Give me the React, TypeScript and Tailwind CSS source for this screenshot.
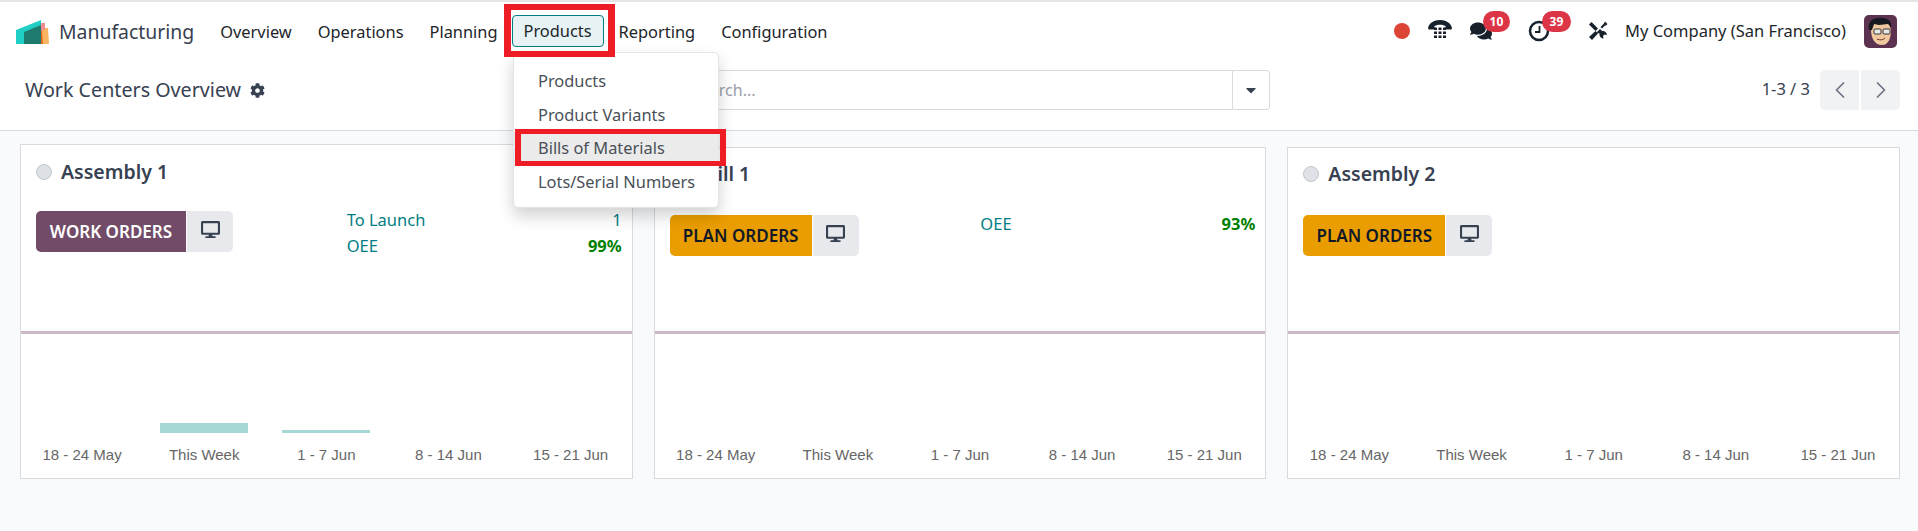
import { FaCog, FaDesktop, FaComments, FaCaretDown } from "react-icons/fa";
import { ChevronLeft, ChevronRight } from "lucide-react";

const NAV = [
  { label: "Overview", cls: "ml-[26px]" },
  { label: "Operations", cls: "ml-[26px]" },
  { label: "Planning", cls: "ml-[26px]" },
];

const WEEKS = ["18 - 24 May", "This Week", "1 - 7 Jun", "8 - 14 Jun", "15 - 21 Jun"];

const MENU = ["Products", "Product Variants", "Bills of Materials", "Lots/Serial Numbers"];

function Logo() {
  return (
    <svg width="34" height="24" viewBox="0 0 34 24">
      <polygon points="22,4 27,3 27,8 32,8 33,24 22,24" fill="#fbb461" />
      <polygon points="25,3 29,3 29,9 25,12" fill="#f28b8f" />
      <polygon points="26,11 27,24 22,24 22,12" fill="#e8691f" />
      <polygon points="0,10 25,0 25,24 0,24" fill="#1fcfc6" />
      <polygon points="8,12 25,5 25,24 8,24" fill="#1f7a6e" />
    </svg>
  );
}

function PhoneIcon() {
  return (
    <svg width="24" height="22" viewBox="0 0 24 22" fill="#16212c">
      <path d="M0 8C1 3 6 0 12 0s11 3 12 8c0 1-1 1.500-2 1.500h-3c-1 0-1.500-.5-1.500-1.500V6C15.500 5 14 4.700 12 4.700S8.500 5 6.500 6v2C6.500 9 6 9.500 5 9.500H2C1 9.500 0 9 0 8z" />
      {[7, 11, 15].map((y) =>
        [6, 10.500, 15].map((x) => <rect key={`${x}-${y}`} x={x} y={y + 0.5} width="3" height="2.500" />),
      )}
    </svg>
  );
}

function ClockIcon() {
  return (
    <svg width="22" height="22" viewBox="0 0 22 22" fill="none" stroke="#16212c" strokeWidth="2.500">
      <circle cx="11" cy="11" r="9" />
      <path d="M11.500 6v6H7" strokeWidth="1.800" />
    </svg>
  );
}

function ToolsIcon() {
  return (
    <svg width="20" height="20" viewBox="0 0 20 20" fill="#16212c">
      <path d="M1 3.500 3.500 1l6.500 6.500-2.500 2.500z" />
      <path d="M17 .5 19.500 3l-1.500 1.500-1 0-3 3-1.500-1.500 3-3z" />
      <path d="M8.500 11.500 12 8l2 2c2.500-.5 5 1.500 5 4l-2.500-.5-1.500 1.500.5 2.500c-2.500 0-4.500-2.500-4-5z" />
      <path d="M7.500 10 10 12.500 4 19 1 16z" />
    </svg>
  );
}

function Avatar() {
  return (
    <svg width="33" height="33" viewBox="0 0 33 33" className="rounded-[5px]">
      <rect width="33" height="33" fill="#5b3350" />
      <path d="M7 14c0 10 4 16 11 16s9-8 9-15l-2-6H10z" fill="#f0c8a0" />
      <path d="M5 15C3 6 10 2 18 3c7 .5 10 4 9 9l-3-3-9 1-5-1-2 6z" fill="#16191f" />
      <rect x="10" y="14" width="7" height="5" rx="1" fill="#e8e8e8" stroke="#333" />
      <rect x="19" y="14" width="7" height="5" rx="1" fill="#e8e8e8" stroke="#333" />
      <path d="M13 24c3 1.500 6 1 8-1" stroke="#7a3a2a" fill="none" />
    </svg>
  );
}

interface CardProps {
  name: string;
  action: string;
  actionClass: string;
  stats: { label: string; value: string; strong?: boolean }[];
  bars: number[];
  cardClass: string;
  titleClass: string;
  actionRowClass: string;
}

function WorkCenterCard({ name, action, actionClass, stats, bars, cardClass, titleClass, actionRowClass }: CardProps) {
  return (
    <div className={`flex flex-col border border-[#d8dadd] bg-white ${cardClass}`}>
      <div className={`flex h-[26px] items-center pl-[15px] ${titleClass}`}>
        <span className="h-[16px] w-[16px] rounded-full border border-[#c3c7cc] bg-[#dee2e6]" />
        <span className="ml-[9px] text-[19.500px] leading-[26px] font-semibold text-[#374151]">{name}</span>
      </div>
      <div className={`flex items-start pl-[15px] pr-[10px] ${actionRowClass}`}>
        <div className="flex h-[41px] overflow-hidden rounded-[5px]">
          <div className={`flex items-center justify-center text-[17px] font-semibold ${actionClass}`}>{action}</div>
          <div className="ml-px flex w-[46px] items-center justify-center bg-[#e7e9ed] text-[#374151]">
            <FaDesktop size={19} className="-mt-1" />
          </div>
        </div>
        <div className="-mt-[4px] ml-auto w-[275px] text-[16.500px]">
          {stats.map((s) => (
            <div key={s.label} className="flex h-[26px] items-center justify-between">
              <span className="text-[#017e84]">{s.label}</span>
              <span className={s.strong ? "font-bold text-[#008000]" : "text-[#017e84]"}>{s.value}</span>
            </div>
          ))}
        </div>
      </div>
      <div className="flex-1" />
      <div className="h-[3px] bg-[#cdb8ca]" />
      <div className="grid h-[99px] grid-cols-5 items-end">
        {bars.map((h, i) => (
          <div key={WEEKS[i]} className="mx-auto w-[88px] bg-[#a6d8d6]" style={{ height: h }} />
        ))}
      </div>
      <div className="grid h-[45px] grid-cols-5 pt-[11px] font-['Liberation_Sans',sans-serif] text-[15px] leading-[22px] text-[#666666]">
        {WEEKS.map((w) => (
          <div key={w} className="text-center">{w}</div>
        ))}
      </div>
    </div>
  );
}

export default function App() {
  return (
    <div className="relative h-[531px] w-[1918px] overflow-hidden bg-[#f9fafb] font-['Noto_Sans',sans-serif] text-[#374151]">
      <div className="h-[2px] bg-[#e5e5e5]" />
      <div className="bg-white">
        {/* Navbar */}
        <div className="flex h-[56px] items-start">
          <div className="mt-[18px] ml-[16px]">
            <Logo />
          </div>
          <span className="mt-[15px] ml-[9px] text-[19.400px] leading-[30px]">Manufacturing</span>
          {NAV.map((n) => (
            <span key={n.label} className={`mt-[15px] text-[16.400px] leading-[30px] text-[#212529] ${n.cls}`}>{n.label}</span>
          ))}
          <span className="mt-[13px] ml-[14px] flex h-[32px] w-[92px] items-center justify-center rounded-[4px] border border-[#017e84] bg-[#e6f2f3] text-[16.400px] text-[#212529]">Products</span>
          <span className="mt-[15px] ml-[15px] text-[16.400px] leading-[30px] text-[#212529]">Reporting</span>
          <span className="mt-[15px] ml-[26px] text-[16.400px] leading-[30px] text-[#212529]">Configuration</span>

          <div className="mt-[13px] ml-auto flex h-[32px] items-center pr-[21px]">
            <span className="h-[16px] w-[16px] rounded-full bg-[#dc4436]" />
            <span className="ml-[18px]"><PhoneIcon /></span>
            <span className="relative ml-[18px] flex">
              <FaComments size={22} color="#16212c" />
              <span className="absolute -top-[9px] left-[13px] flex h-[21px] w-[27px] items-center justify-center rounded-full bg-[#dc3545] text-[12px] font-bold text-white">10</span>
            </span>
            <span className="relative ml-[36px] flex">
              <ClockIcon />
              <span className="absolute -top-[9px] left-[14px] flex h-[21px] w-[29px] items-center justify-center rounded-full bg-[#dc3545] text-[12px] font-bold text-white">39</span>
            </span>
            <span className="ml-[38px]"><ToolsIcon /></span>
            <span className="ml-[17px] text-[16.500px] text-[#212529]">My Company (San Francisco)</span>
            <span className="ml-[18px]"><Avatar /></span>
          </div>
        </div>

        {/* Control panel */}
        <div className="flex h-[73px] items-start border-b border-[#d8dadd] pl-[25px]">
          <div className="mt-[17px] flex w-[245px] items-center">
            <span className="whitespace-nowrap text-[19.700px] leading-[30px] text-[#374151]">Work Centers Overview</span>
            <FaCog size={15} className="ml-[9px] shrink-0" />
          </div>
          <div className="mt-[12px] ml-[409px] flex h-[40px] w-[591px]">
            <div className="flex flex-1 items-center rounded-l-[4px] border border-[#d8dadd] pl-[12px] text-[16px] text-[#9aa0a8]">Search...</div>
            <div className="flex w-[37px] items-center justify-center rounded-r-[4px] border border-l-0 border-[#d8dadd] text-[#374151]">
              <FaCaretDown size={16} />
            </div>
          </div>
          <span className="mt-[18px] ml-auto text-[16.500px] leading-[26px]">1-3 / 3</span>
          <div className="mt-[12px] mr-[18px] ml-[10px] flex gap-[2px]">
            <span className="flex h-[40px] w-[39px] items-center justify-center rounded-l-[5px] bg-[#f1f2f4] text-[#6b7280]"><ChevronLeft size={28} strokeWidth={1.500} /></span>
            <span className="flex h-[40px] w-[39px] items-center justify-center rounded-r-[5px] bg-[#f1f2f4] text-[#6b7280]"><ChevronRight size={28} strokeWidth={1.500} /></span>
          </div>
        </div>
      </div>

      {/* Cards */}
      <div className="grid h-[348px] grid-cols-3 gap-[21px] pt-[13px] pr-[18px] pl-[20px]">
        <WorkCenterCard
          name="Assembly 1"
          action="WORK ORDERS"
          actionClass="w-[150px] bg-[#714b67] text-white"
          stats={[
            { label: "To Launch", value: "1" },
            { label: "OEE", value: "99%", strong: true },
          ]}
          bars={[0, 10, 3, 0, 0]}
          cardClass=""
          titleClass="mt-[14px]"
          actionRowClass="mt-[26px]"
        />
        <WorkCenterCard
          name="Drill 1"
          action="PLAN ORDERS"
          actionClass="w-[142px] bg-[#e99d00] text-[#111827]"
          stats={[{ label: "OEE", value: "93%", strong: true }]}
          bars={[0, 0, 0, 0, 0]}
          cardClass="mt-[3px]"
          titleClass="mt-[13px]"
          actionRowClass="mt-[28px]"
        />
        <WorkCenterCard
          name="Assembly 2"
          action="PLAN ORDERS"
          actionClass="w-[142px] bg-[#e99d00] text-[#111827]"
          stats={[]}
          bars={[0, 0, 0, 0, 0]}
          cardClass="mt-[3px]"
          titleClass="mt-[13px]"
          actionRowClass="mt-[28px]"
        />
      </div>

      {/* Products dropdown */}
      <div className="absolute top-[52px] left-[513px] h-[156px] w-[206px] rounded-[5px] border border-[#e2e4e7] bg-white py-[12px] shadow-[0_8px_16px_rgba(0,0,0,0.18)]">
        {MENU.map((m) => (
          <div key={m} className={`flex h-[33.500px] items-center pl-[24px] text-[16.400px] text-[#495057] ${m === "Bills of Materials" ? "bg-[#ebebeb]" : ""}`}>{m}</div>
        ))}
      </div>

      {/* Screenshot annotations */}
      <div className="absolute top-[4px] left-[504px] h-[53px] w-[111px] border-x-[7px] border-y-[6px] border-[#ee1c25]" />
      <div className="absolute top-[129px] left-[515px] h-[37px] w-[211px] border-x-[6px] border-y-[5px] border-[#ee1c25]" />
    </div>
  );
}
